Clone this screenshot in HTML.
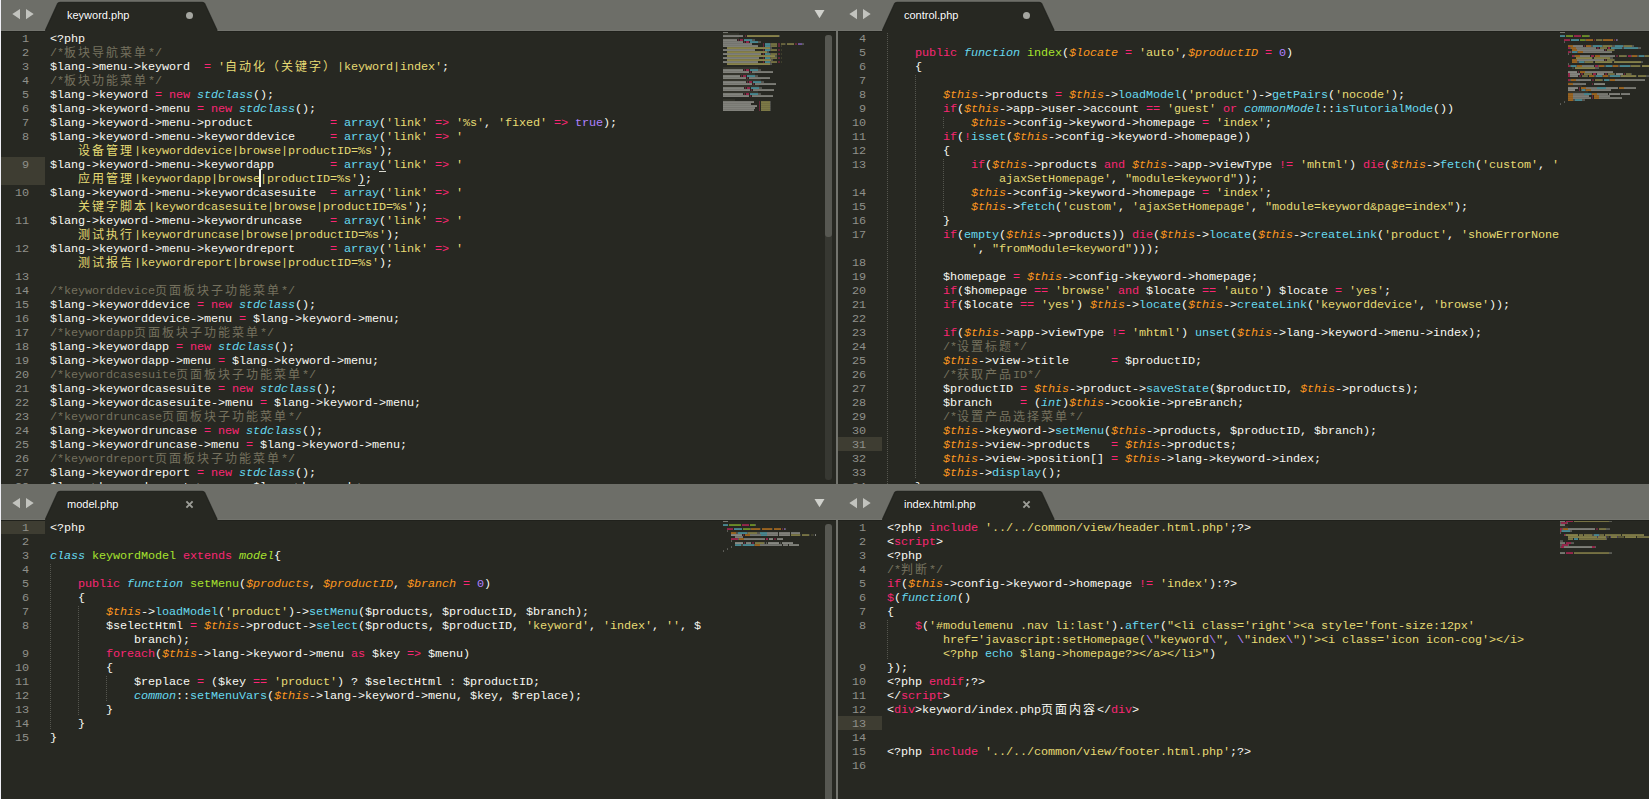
<!DOCTYPE html>
<html><head><meta charset="utf-8"><title>Sublime Text</title>
<style>
html,body{margin:0;padding:0;background:#272822;overflow:hidden;}
#root{position:relative;width:1649px;height:799px;overflow:hidden;background:#272822;
 font-family:"Liberation Mono","Noto Sans CJK SC",monospace;font-size:11.8px;line-height:14px;color:#f8f8f2;}
.abs,.gut,.code,.mm,.ig,.tl,.dot,.bar,.hl,.sb,.pane{position:absolute;}
.pane{overflow:hidden;}
.bar{left:0;width:1649px;background:#6d6e68;}
.gut{width:29px;text-align:right;color:#8f908a;white-space:pre;letter-spacing:-0.0812px;padding-top:1px;}
.gut div,.code div{height:14px;}
.code{white-space:pre;letter-spacing:-0.0812px;padding-top:1px;}
.z{font-family:"Liberation Mono","Noto Sans CJK SC",monospace;font-size:12px;letter-spacing:2px;line-height:0;position:relative;top:1px;}
.c{color:#75715e}.s{color:#e6db74}.k{color:#f92672}.b{color:#66d9ef}
.bi{color:#66d9ef;font-style:italic}.g{color:#a6e22e}.gi{color:#a6e22e;font-style:italic}
.o{color:#fd971f;font-style:italic}.p{color:#ae81ff}.y{color:#f8f8f2}
.tl{font-family:"Liberation Sans",sans-serif;font-size:11px;line-height:14px;color:#fff;white-space:nowrap;letter-spacing:0;
 text-shadow:0 0 1px rgba(0,0,0,.6);}
.dot{width:7px;height:7px;border-radius:50%;background:#a5a6a0;}
.hl{background:#3e3d32;width:44px;}
.ig{width:1px;background-image:linear-gradient(to bottom,#55564f 50%,rgba(0,0,0,0) 50%);background-size:1px 2px;}
.sb{width:7px;border-radius:3px;}
</style></head><body><div id="root">
<div class="pane" style="left:0;top:31px;width:836px;height:453px">
<div class="hl" style="left:1px;top:126px;height:28px"></div>
<div class="gut" style="left:0px;top:0px"><div>1</div><div>2</div><div>3</div><div>4</div><div>5</div><div>6</div><div>7</div><div>8</div><div>&nbsp;</div><div>9</div><div>&nbsp;</div><div>10</div><div>&nbsp;</div><div>11</div><div>&nbsp;</div><div>12</div><div>&nbsp;</div><div>13</div><div>14</div><div>15</div><div>16</div><div>17</div><div>18</div><div>19</div><div>20</div><div>21</div><div>22</div><div>23</div><div>24</div><div>25</div><div>26</div><div>27</div><div>28</div></div>
<div class="code" style="left:50px;top:0px"><div>&lt;?php</div><div><span class="c">/*<span class="z">板块导航菜单</span>*/</span></div><div>$lang-&gt;menu-&gt;keyword  <span class="k">=</span> <span class="s">'<span class="z">自动化（关键字）</span>|keyword|index'</span>;</div><div><span class="c">/*<span class="z">板块功能菜单</span>*/</span></div><div>$lang-&gt;keyword <span class="k">=</span> <span class="k">new</span> <span class="bi">stdclass</span>();</div><div>$lang-&gt;keyword-&gt;menu <span class="k">=</span> <span class="k">new</span> <span class="bi">stdclass</span>();</div><div>$lang-&gt;keyword-&gt;menu-&gt;product           <span class="k">=</span> <span class="b">array</span>(<span class="s">'link'</span> <span class="k">=&gt;</span> <span class="s">'%s'</span>, <span class="s">'fixed'</span> <span class="k">=&gt;</span> <span class="p">true</span>);</div><div>$lang-&gt;keyword-&gt;menu-&gt;keyworddevice     <span class="k">=</span> <span class="b">array</span>(<span class="s">'link'</span> <span class="k">=&gt;</span> <span class="s">'</span></div><div>    <span class="s"><span class="z">设备管理</span>|keyworddevice|browse|productID=%s'</span>);</div><div>$lang-&gt;keyword-&gt;menu-&gt;keywordapp        <span class="k">=</span> <span class="b">array</span>(<span class="s">'link'</span> <span class="k">=&gt;</span> <span class="s">'</span></div><div>    <span class="s"><span class="z">应用管理</span>|keywordapp|browse|productID=%s'</span>);</div><div>$lang-&gt;keyword-&gt;menu-&gt;keywordcasesuite  <span class="k">=</span> <span class="b">array</span>(<span class="s">'link'</span> <span class="k">=&gt;</span> <span class="s">'</span></div><div>    <span class="s"><span class="z">关键字脚本</span>|keywordcasesuite|browse|productID=%s'</span>);</div><div>$lang-&gt;keyword-&gt;menu-&gt;keywordruncase    <span class="k">=</span> <span class="b">array</span>(<span class="s">'link'</span> <span class="k">=&gt;</span> <span class="s">'</span></div><div>    <span class="s"><span class="z">测试执行</span>|keywordruncase|browse|productID=%s'</span>);</div><div>$lang-&gt;keyword-&gt;menu-&gt;keywordreport     <span class="k">=</span> <span class="b">array</span>(<span class="s">'link'</span> <span class="k">=&gt;</span> <span class="s">'</span></div><div>    <span class="s"><span class="z">测试报告</span>|keywordreport|browse|productID=%s'</span>);</div><div>&nbsp;</div><div><span class="c">/*keyworddevice<span class="z">页面板块子功能菜单</span>*/</span></div><div>$lang-&gt;keyworddevice <span class="k">=</span> <span class="k">new</span> <span class="bi">stdclass</span>();</div><div>$lang-&gt;keyworddevice-&gt;menu <span class="k">=</span> $lang-&gt;keyword-&gt;menu;</div><div><span class="c">/*keywordapp<span class="z">页面板块子功能菜单</span>*/</span></div><div>$lang-&gt;keywordapp <span class="k">=</span> <span class="k">new</span> <span class="bi">stdclass</span>();</div><div>$lang-&gt;keywordapp-&gt;menu <span class="k">=</span> $lang-&gt;keyword-&gt;menu;</div><div><span class="c">/*keywordcasesuite<span class="z">页面板块子功能菜单</span>*/</span></div><div>$lang-&gt;keywordcasesuite <span class="k">=</span> <span class="k">new</span> <span class="bi">stdclass</span>();</div><div>$lang-&gt;keywordcasesuite-&gt;menu <span class="k">=</span> $lang-&gt;keyword-&gt;menu;</div><div><span class="c">/*keywordruncase<span class="z">页面板块子功能菜单</span>*/</span></div><div>$lang-&gt;keywordruncase <span class="k">=</span> <span class="k">new</span> <span class="bi">stdclass</span>();</div><div>$lang-&gt;keywordruncase-&gt;menu <span class="k">=</span> $lang-&gt;keyword-&gt;menu;</div><div><span class="c">/*keywordreport<span class="z">页面板块子功能菜单</span>*/</span></div><div>$lang-&gt;keywordreport <span class="k">=</span> <span class="k">new</span> <span class="bi">stdclass</span>();</div><div>$lang-&gt;keywordreport-&gt;menu <span class="k">=</span> $lang-&gt;keyword-&gt;menu;</div></div>
<svg class="mm" style="left:723px;top:0px" width="97" height="80" viewBox="0 0 97 80"><rect x="0" y="0.2" width="5" height="1.7" fill="#f8f8f2" opacity="0.43"/><rect x="0" y="2.2" width="16" height="1.7" fill="#75715e" opacity="0.20"/><rect x="0" y="4.2" width="20" height="1.7" fill="#f8f8f2" opacity="0.46"/><rect x="22" y="4.2" width="1" height="1.7" fill="#f92672" opacity="0.36"/><rect x="24" y="4.2" width="32" height="1.7" fill="#e6db74" opacity="0.57"/><rect x="56" y="4.2" width="1" height="1.7" fill="#f8f8f2" opacity="0.21"/><rect x="0" y="6.2" width="16" height="1.7" fill="#75715e" opacity="0.20"/><rect x="0" y="8.2" width="14" height="1.7" fill="#f8f8f2" opacity="0.48"/><rect x="15" y="8.2" width="1" height="1.7" fill="#f92672" opacity="0.36"/><rect x="17" y="8.2" width="3" height="1.7" fill="#f92672" opacity="0.60"/><rect x="21" y="8.2" width="8" height="1.7" fill="#66d9ef" opacity="0.60"/><rect x="29" y="8.2" width="3" height="1.7" fill="#f8f8f2" opacity="0.26"/><rect x="0" y="10.2" width="20" height="1.7" fill="#f8f8f2" opacity="0.46"/><rect x="21" y="10.2" width="1" height="1.7" fill="#f92672" opacity="0.36"/><rect x="23" y="10.2" width="3" height="1.7" fill="#f92672" opacity="0.60"/><rect x="27" y="10.2" width="8" height="1.7" fill="#66d9ef" opacity="0.60"/><rect x="35" y="10.2" width="3" height="1.7" fill="#f8f8f2" opacity="0.26"/><rect x="0" y="12.2" width="29" height="1.7" fill="#f8f8f2" opacity="0.46"/><rect x="40" y="12.2" width="1" height="1.7" fill="#f92672" opacity="0.36"/><rect x="42" y="12.2" width="5" height="1.7" fill="#66d9ef" opacity="0.60"/><rect x="47" y="12.2" width="1" height="1.7" fill="#f8f8f2" opacity="0.29"/><rect x="48" y="12.2" width="6" height="1.7" fill="#e6db74" opacity="0.45"/><rect x="55" y="12.2" width="2" height="1.7" fill="#f92672" opacity="0.34"/><rect x="58" y="12.2" width="4" height="1.7" fill="#e6db74" opacity="0.38"/><rect x="62" y="12.2" width="1" height="1.7" fill="#f8f8f2" opacity="0.13"/><rect x="64" y="12.2" width="7" height="1.7" fill="#e6db74" opacity="0.47"/><rect x="72" y="12.2" width="2" height="1.7" fill="#f92672" opacity="0.34"/><rect x="75" y="12.2" width="4" height="1.7" fill="#ae81ff" opacity="0.60"/><rect x="79" y="12.2" width="2" height="1.7" fill="#f8f8f2" opacity="0.25"/><rect x="0" y="14.2" width="35" height="1.7" fill="#f8f8f2" opacity="0.47"/><rect x="40" y="14.2" width="1" height="1.7" fill="#f92672" opacity="0.36"/><rect x="42" y="14.2" width="5" height="1.7" fill="#66d9ef" opacity="0.60"/><rect x="47" y="14.2" width="1" height="1.7" fill="#f8f8f2" opacity="0.29"/><rect x="48" y="14.2" width="6" height="1.7" fill="#e6db74" opacity="0.45"/><rect x="55" y="14.2" width="2" height="1.7" fill="#f92672" opacity="0.34"/><rect x="58" y="14.2" width="1" height="1.7" fill="#e6db74" opacity="0.15"/><rect x="4" y="16.2" width="43" height="1.7" fill="#e6db74" opacity="0.57"/><rect x="47" y="16.2" width="2" height="1.7" fill="#f8f8f2" opacity="0.25"/><rect x="0" y="18.2" width="32" height="1.7" fill="#f8f8f2" opacity="0.47"/><rect x="40" y="18.2" width="1" height="1.7" fill="#f92672" opacity="0.36"/><rect x="42" y="18.2" width="5" height="1.7" fill="#66d9ef" opacity="0.60"/><rect x="47" y="18.2" width="1" height="1.7" fill="#f8f8f2" opacity="0.29"/><rect x="48" y="18.2" width="6" height="1.7" fill="#e6db74" opacity="0.45"/><rect x="55" y="18.2" width="2" height="1.7" fill="#f92672" opacity="0.34"/><rect x="58" y="18.2" width="1" height="1.7" fill="#e6db74" opacity="0.15"/><rect x="4" y="20.2" width="40" height="1.7" fill="#e6db74" opacity="0.57"/><rect x="44" y="20.2" width="2" height="1.7" fill="#f8f8f2" opacity="0.25"/><rect x="0" y="22.2" width="38" height="1.7" fill="#f8f8f2" opacity="0.47"/><rect x="40" y="22.2" width="1" height="1.7" fill="#f92672" opacity="0.36"/><rect x="42" y="22.2" width="5" height="1.7" fill="#66d9ef" opacity="0.60"/><rect x="47" y="22.2" width="1" height="1.7" fill="#f8f8f2" opacity="0.29"/><rect x="48" y="22.2" width="6" height="1.7" fill="#e6db74" opacity="0.45"/><rect x="55" y="22.2" width="2" height="1.7" fill="#f92672" opacity="0.34"/><rect x="58" y="22.2" width="1" height="1.7" fill="#e6db74" opacity="0.15"/><rect x="4" y="24.2" width="48" height="1.7" fill="#e6db74" opacity="0.58"/><rect x="52" y="24.2" width="2" height="1.7" fill="#f8f8f2" opacity="0.25"/><rect x="0" y="26.2" width="36" height="1.7" fill="#f8f8f2" opacity="0.47"/><rect x="40" y="26.2" width="1" height="1.7" fill="#f92672" opacity="0.36"/><rect x="42" y="26.2" width="5" height="1.7" fill="#66d9ef" opacity="0.60"/><rect x="47" y="26.2" width="1" height="1.7" fill="#f8f8f2" opacity="0.29"/><rect x="48" y="26.2" width="6" height="1.7" fill="#e6db74" opacity="0.45"/><rect x="55" y="26.2" width="2" height="1.7" fill="#f92672" opacity="0.34"/><rect x="58" y="26.2" width="1" height="1.7" fill="#e6db74" opacity="0.15"/><rect x="4" y="28.2" width="44" height="1.7" fill="#e6db74" opacity="0.57"/><rect x="48" y="28.2" width="2" height="1.7" fill="#f8f8f2" opacity="0.25"/><rect x="0" y="30.2" width="35" height="1.7" fill="#f8f8f2" opacity="0.47"/><rect x="40" y="30.2" width="1" height="1.7" fill="#f92672" opacity="0.36"/><rect x="42" y="30.2" width="5" height="1.7" fill="#66d9ef" opacity="0.60"/><rect x="47" y="30.2" width="1" height="1.7" fill="#f8f8f2" opacity="0.29"/><rect x="48" y="30.2" width="6" height="1.7" fill="#e6db74" opacity="0.45"/><rect x="55" y="30.2" width="2" height="1.7" fill="#f92672" opacity="0.34"/><rect x="58" y="30.2" width="1" height="1.7" fill="#e6db74" opacity="0.15"/><rect x="4" y="32.2" width="43" height="1.7" fill="#e6db74" opacity="0.57"/><rect x="47" y="32.2" width="2" height="1.7" fill="#f8f8f2" opacity="0.25"/><rect x="0" y="36.2" width="35" height="1.7" fill="#75715e" opacity="0.21"/><rect x="0" y="38.2" width="20" height="1.7" fill="#f8f8f2" opacity="0.49"/><rect x="21" y="38.2" width="1" height="1.7" fill="#f92672" opacity="0.36"/><rect x="23" y="38.2" width="3" height="1.7" fill="#f92672" opacity="0.60"/><rect x="27" y="38.2" width="8" height="1.7" fill="#66d9ef" opacity="0.60"/><rect x="35" y="38.2" width="3" height="1.7" fill="#f8f8f2" opacity="0.26"/><rect x="0" y="40.2" width="26" height="1.7" fill="#f8f8f2" opacity="0.48"/><rect x="27" y="40.2" width="1" height="1.7" fill="#f92672" opacity="0.36"/><rect x="29" y="40.2" width="21" height="1.7" fill="#f8f8f2" opacity="0.45"/><rect x="0" y="42.2" width="32" height="1.7" fill="#75715e" opacity="0.21"/><rect x="0" y="44.2" width="17" height="1.7" fill="#f8f8f2" opacity="0.49"/><rect x="18" y="44.2" width="1" height="1.7" fill="#f92672" opacity="0.36"/><rect x="20" y="44.2" width="3" height="1.7" fill="#f92672" opacity="0.60"/><rect x="24" y="44.2" width="8" height="1.7" fill="#66d9ef" opacity="0.60"/><rect x="32" y="44.2" width="3" height="1.7" fill="#f8f8f2" opacity="0.26"/><rect x="0" y="46.2" width="23" height="1.7" fill="#f8f8f2" opacity="0.47"/><rect x="24" y="46.2" width="1" height="1.7" fill="#f92672" opacity="0.36"/><rect x="26" y="46.2" width="21" height="1.7" fill="#f8f8f2" opacity="0.45"/><rect x="0" y="48.2" width="38" height="1.7" fill="#75715e" opacity="0.22"/><rect x="0" y="50.2" width="23" height="1.7" fill="#f8f8f2" opacity="0.50"/><rect x="24" y="50.2" width="1" height="1.7" fill="#f92672" opacity="0.36"/><rect x="26" y="50.2" width="3" height="1.7" fill="#f92672" opacity="0.60"/><rect x="30" y="50.2" width="8" height="1.7" fill="#66d9ef" opacity="0.60"/><rect x="38" y="50.2" width="3" height="1.7" fill="#f8f8f2" opacity="0.26"/><rect x="0" y="52.2" width="29" height="1.7" fill="#f8f8f2" opacity="0.48"/><rect x="30" y="52.2" width="1" height="1.7" fill="#f92672" opacity="0.36"/><rect x="32" y="52.2" width="21" height="1.7" fill="#f8f8f2" opacity="0.45"/><rect x="0" y="54.2" width="36" height="1.7" fill="#75715e" opacity="0.21"/><rect x="0" y="56.2" width="21" height="1.7" fill="#f8f8f2" opacity="0.49"/><rect x="22" y="56.2" width="1" height="1.7" fill="#f92672" opacity="0.36"/><rect x="24" y="56.2" width="3" height="1.7" fill="#f92672" opacity="0.60"/><rect x="28" y="56.2" width="8" height="1.7" fill="#66d9ef" opacity="0.60"/><rect x="36" y="56.2" width="3" height="1.7" fill="#f8f8f2" opacity="0.26"/><rect x="0" y="58.2" width="27" height="1.7" fill="#f8f8f2" opacity="0.48"/><rect x="28" y="58.2" width="1" height="1.7" fill="#f92672" opacity="0.36"/><rect x="30" y="58.2" width="21" height="1.7" fill="#f8f8f2" opacity="0.45"/><rect x="0" y="60.2" width="35" height="1.7" fill="#75715e" opacity="0.21"/><rect x="0" y="62.2" width="20" height="1.7" fill="#f8f8f2" opacity="0.49"/><rect x="21" y="62.2" width="1" height="1.7" fill="#f92672" opacity="0.36"/><rect x="23" y="62.2" width="3" height="1.7" fill="#f92672" opacity="0.60"/><rect x="27" y="62.2" width="8" height="1.7" fill="#66d9ef" opacity="0.60"/><rect x="35" y="62.2" width="3" height="1.7" fill="#f8f8f2" opacity="0.26"/><rect x="0" y="64.2" width="26" height="1.7" fill="#f8f8f2" opacity="0.48"/><rect x="27" y="64.2" width="1" height="1.7" fill="#f92672" opacity="0.36"/><rect x="29" y="64.2" width="21" height="1.7" fill="#f8f8f2" opacity="0.45"/><rect x="0" y="68.2" width="12" height="1.7" fill="#75715e" opacity="0.18"/><rect x="0" y="70.2" width="31" height="1.7" fill="#f8f8f2" opacity="0.48"/><rect x="36" y="70.2" width="1" height="1.7" fill="#f92672" opacity="0.36"/><rect x="38" y="70.2" width="9" height="1.7" fill="#e6db74" opacity="0.50"/><rect x="47" y="70.2" width="1" height="1.7" fill="#f8f8f2" opacity="0.21"/><rect x="0" y="72.2" width="28" height="1.7" fill="#f8f8f2" opacity="0.48"/><rect x="36" y="72.2" width="1" height="1.7" fill="#f92672" opacity="0.36"/><rect x="38" y="72.2" width="9" height="1.7" fill="#e6db74" opacity="0.50"/><rect x="47" y="72.2" width="1" height="1.7" fill="#f8f8f2" opacity="0.21"/><rect x="0" y="74.2" width="34" height="1.7" fill="#f8f8f2" opacity="0.49"/><rect x="36" y="74.2" width="1" height="1.7" fill="#f92672" opacity="0.36"/><rect x="38" y="74.2" width="9" height="1.7" fill="#e6db74" opacity="0.50"/><rect x="47" y="74.2" width="1" height="1.7" fill="#f8f8f2" opacity="0.21"/><rect x="0" y="76.2" width="32" height="1.7" fill="#f8f8f2" opacity="0.48"/><rect x="36" y="76.2" width="1" height="1.7" fill="#f92672" opacity="0.36"/><rect x="38" y="76.2" width="9" height="1.7" fill="#e6db74" opacity="0.50"/><rect x="47" y="76.2" width="1" height="1.7" fill="#f8f8f2" opacity="0.21"/><rect x="0" y="78.2" width="31" height="1.7" fill="#f8f8f2" opacity="0.48"/><rect x="36" y="78.2" width="1" height="1.7" fill="#f92672" opacity="0.36"/><rect x="38" y="78.2" width="9" height="1.7" fill="#e6db74" opacity="0.50"/><rect x="47" y="78.2" width="1" height="1.7" fill="#f8f8f2" opacity="0.21"/></svg>
<div class="abs" style="left:259px;top:138px;width:2px;height:18px;background:#f8f8f0"></div>
<div class="abs" style="left:379px;top:140px;width:7px;height:1px;background:#d8d8d0"></div>
<div class="abs" style="left:358px;top:154px;width:7px;height:1px;background:#d8d8d0"></div>
<div class="sb" style="left:825px;top:4px;height:445px;background:#373832"></div>
<div class="sb" style="left:825px;top:4px;height:202px;background:#575852"></div>
</div>
<div class="pane" style="left:838px;top:31px;width:811px;height:453px">
<div class="hl" style="left:0px;top:406px;height:14px"></div>
<div class="gut" style="left:-1px;top:0px"><div>4</div><div>5</div><div>6</div><div>7</div><div>8</div><div>9</div><div>10</div><div>11</div><div>12</div><div>13</div><div>&nbsp;</div><div>14</div><div>15</div><div>16</div><div>17</div><div>&nbsp;</div><div>18</div><div>19</div><div>20</div><div>21</div><div>22</div><div>23</div><div>24</div><div>25</div><div>26</div><div>27</div><div>28</div><div>29</div><div>30</div><div>31</div><div>32</div><div>33</div><div>34</div></div>
<div class="code" style="left:49px;top:0px"><div>&nbsp;</div><div>    <span class="k">public</span> <span class="bi">function</span> <span class="g">index</span>(<span class="o">$locate</span> <span class="k">=</span> <span class="s">'auto'</span>,<span class="o">$productID</span> <span class="k">=</span> <span class="p">0</span>)</div><div>    {</div><div>&nbsp;</div><div>        <span class="o">$this</span>-&gt;products <span class="k">=</span> <span class="o">$this</span>-&gt;<span class="b">loadModel</span>(<span class="s">'product'</span>)-&gt;<span class="b">getPairs</span>(<span class="s">'nocode'</span>);</div><div>        <span class="k">if</span>(<span class="o">$this</span>-&gt;app-&gt;user-&gt;account <span class="k">==</span> <span class="s">'guest'</span> <span class="k">or</span> <span class="bi">commonModel</span>::<span class="b">isTutorialMode</span>())</div><div>            <span class="o">$this</span>-&gt;config-&gt;keyword-&gt;homepage <span class="k">=</span> <span class="s">'index'</span>;</div><div>        <span class="k">if</span>(<span class="k">!</span><span class="b">isset</span>(<span class="o">$this</span>-&gt;config-&gt;keyword-&gt;homepage))</div><div>        {</div><div>            <span class="k">if</span>(<span class="o">$this</span>-&gt;products <span class="k">and</span> <span class="o">$this</span>-&gt;app-&gt;viewType <span class="k">!=</span> <span class="s">'mhtml'</span>) <span class="k">die</span>(<span class="o">$this</span>-&gt;<span class="b">fetch</span>(<span class="s">'custom'</span>, <span class="s">'</span></div><div>                <span class="s">ajaxSetHomepage'</span>, <span class="s">"module=keyword"</span>));</div><div>            <span class="o">$this</span>-&gt;config-&gt;keyword-&gt;homepage <span class="k">=</span> <span class="s">'index'</span>;</div><div>            <span class="o">$this</span>-&gt;<span class="b">fetch</span>(<span class="s">'custom'</span>, <span class="s">'ajaxSetHomepage'</span>, <span class="s">"module=keyword&amp;page=index"</span>);</div><div>        }</div><div>        <span class="k">if</span>(<span class="b">empty</span>(<span class="o">$this</span>-&gt;products)) <span class="k">die</span>(<span class="o">$this</span>-&gt;<span class="b">locate</span>(<span class="o">$this</span>-&gt;<span class="b">createLink</span>(<span class="s">'product'</span>, <span class="s">'showErrorNone</span></div><div>            <span class="s">'</span>, <span class="s">"fromModule=keyword"</span>)));</div><div>&nbsp;</div><div>        $homepage <span class="k">=</span> <span class="o">$this</span>-&gt;config-&gt;keyword-&gt;homepage;</div><div>        <span class="k">if</span>($homepage <span class="k">==</span> <span class="s">'browse'</span> <span class="k">and</span> $locate <span class="k">==</span> <span class="s">'auto'</span>) $locate <span class="k">=</span> <span class="s">'yes'</span>;</div><div>        <span class="k">if</span>($locate <span class="k">==</span> <span class="s">'yes'</span>) <span class="o">$this</span>-&gt;<span class="b">locate</span>(<span class="o">$this</span>-&gt;<span class="b">createLink</span>(<span class="s">'keyworddevice'</span>, <span class="s">'browse'</span>));</div><div>&nbsp;</div><div>        <span class="k">if</span>(<span class="o">$this</span>-&gt;app-&gt;viewType <span class="k">!=</span> <span class="s">'mhtml'</span>) <span class="b">unset</span>(<span class="o">$this</span>-&gt;lang-&gt;keyword-&gt;menu-&gt;index);</div><div>        <span class="c">/*<span class="z">设置标题</span>*/</span></div><div>        <span class="o">$this</span>-&gt;view-&gt;title      <span class="k">=</span> $productID;</div><div>        <span class="c">/*<span class="z">获取产品</span>ID*/</span></div><div>        $productID <span class="k">=</span> <span class="o">$this</span>-&gt;product-&gt;<span class="b">saveState</span>($productID, <span class="o">$this</span>-&gt;products);</div><div>        $branch    <span class="k">=</span> (<span class="bi">int</span>)<span class="o">$this</span>-&gt;cookie-&gt;preBranch;</div><div>        <span class="c">/*<span class="z">设置产品选择菜单</span>*/</span></div><div>        <span class="o">$this</span>-&gt;keyword-&gt;<span class="b">setMenu</span>(<span class="o">$this</span>-&gt;products, $productID, $branch);</div><div>        <span class="o">$this</span>-&gt;view-&gt;products   <span class="k">=</span> <span class="o">$this</span>-&gt;products;</div><div>        <span class="o">$this</span>-&gt;view-&gt;position[] <span class="k">=</span> <span class="o">$this</span>-&gt;lang-&gt;keyword-&gt;index;</div><div>        <span class="o">$this</span>-&gt;<span class="b">display</span>();</div><div>    }</div></div>
<div class="ig" style="left:49px;top:2px;height:460px"></div>
<div class="ig" style="left:77px;top:44px;height:404px"></div>
<div class="ig" style="left:105px;top:86px;height:12px"></div>
<div class="ig" style="left:105px;top:128px;height:54px"></div>
<svg class="mm" style="left:722px;top:0px" width="89" height="74" viewBox="0 0 89 74"><rect x="0" y="0.2" width="5" height="1.7" fill="#f8f8f2" opacity="0.43"/><rect x="0" y="4.2" width="5" height="1.7" fill="#66d9ef" opacity="0.60"/><rect x="6" y="4.2" width="7" height="1.7" fill="#a6e22e" opacity="0.60"/><rect x="14" y="4.2" width="7" height="1.7" fill="#f92672" opacity="0.60"/><rect x="22" y="4.2" width="7" height="1.7" fill="#a6e22e" opacity="0.60"/><rect x="29" y="4.2" width="1" height="1.7" fill="#f8f8f2" opacity="0.29"/><rect x="4" y="8.2" width="6" height="1.7" fill="#f92672" opacity="0.60"/><rect x="11" y="8.2" width="8" height="1.7" fill="#66d9ef" opacity="0.60"/><rect x="20" y="8.2" width="5" height="1.7" fill="#a6e22e" opacity="0.60"/><rect x="25" y="8.2" width="1" height="1.7" fill="#f8f8f2" opacity="0.29"/><rect x="26" y="8.2" width="7" height="1.7" fill="#fd971f" opacity="0.60"/><rect x="34" y="8.2" width="1" height="1.7" fill="#f92672" opacity="0.36"/><rect x="36" y="8.2" width="6" height="1.7" fill="#e6db74" opacity="0.45"/><rect x="42" y="8.2" width="1" height="1.7" fill="#f8f8f2" opacity="0.13"/><rect x="43" y="8.2" width="10" height="1.7" fill="#fd971f" opacity="0.60"/><rect x="54" y="8.2" width="1" height="1.7" fill="#f92672" opacity="0.36"/><rect x="56" y="8.2" width="1" height="1.7" fill="#ae81ff" opacity="0.60"/><rect x="57" y="8.2" width="1" height="1.7" fill="#f8f8f2" opacity="0.29"/><rect x="4" y="10.2" width="1" height="1.7" fill="#f8f8f2" opacity="0.29"/><rect x="8" y="14.2" width="5" height="1.7" fill="#fd971f" opacity="0.60"/><rect x="13" y="14.2" width="10" height="1.7" fill="#f8f8f2" opacity="0.46"/><rect x="24" y="14.2" width="1" height="1.7" fill="#f92672" opacity="0.36"/><rect x="26" y="14.2" width="5" height="1.7" fill="#fd971f" opacity="0.60"/><rect x="31" y="14.2" width="2" height="1.7" fill="#f8f8f2" opacity="0.23"/><rect x="33" y="14.2" width="9" height="1.7" fill="#66d9ef" opacity="0.60"/><rect x="42" y="14.2" width="1" height="1.7" fill="#f8f8f2" opacity="0.29"/><rect x="43" y="14.2" width="9" height="1.7" fill="#e6db74" opacity="0.50"/><rect x="52" y="14.2" width="3" height="1.7" fill="#f8f8f2" opacity="0.25"/><rect x="55" y="14.2" width="8" height="1.7" fill="#66d9ef" opacity="0.60"/><rect x="63" y="14.2" width="1" height="1.7" fill="#f8f8f2" opacity="0.29"/><rect x="64" y="14.2" width="8" height="1.7" fill="#e6db74" opacity="0.49"/><rect x="72" y="14.2" width="2" height="1.7" fill="#f8f8f2" opacity="0.25"/><rect x="8" y="16.2" width="2" height="1.7" fill="#f92672" opacity="0.60"/><rect x="10" y="16.2" width="1" height="1.7" fill="#f8f8f2" opacity="0.29"/><rect x="11" y="16.2" width="5" height="1.7" fill="#fd971f" opacity="0.60"/><rect x="16" y="16.2" width="20" height="1.7" fill="#f8f8f2" opacity="0.43"/><rect x="37" y="16.2" width="2" height="1.7" fill="#f92672" opacity="0.36"/><rect x="40" y="16.2" width="7" height="1.7" fill="#e6db74" opacity="0.47"/><rect x="48" y="16.2" width="2" height="1.7" fill="#f92672" opacity="0.60"/><rect x="51" y="16.2" width="11" height="1.7" fill="#66d9ef" opacity="0.60"/><rect x="62" y="16.2" width="2" height="1.7" fill="#f8f8f2" opacity="0.18"/><rect x="64" y="16.2" width="14" height="1.7" fill="#66d9ef" opacity="0.60"/><rect x="78" y="16.2" width="3" height="1.7" fill="#f8f8f2" opacity="0.29"/><rect x="12" y="18.2" width="5" height="1.7" fill="#fd971f" opacity="0.60"/><rect x="17" y="18.2" width="27" height="1.7" fill="#f8f8f2" opacity="0.46"/><rect x="45" y="18.2" width="1" height="1.7" fill="#f92672" opacity="0.36"/><rect x="47" y="18.2" width="7" height="1.7" fill="#e6db74" opacity="0.47"/><rect x="54" y="18.2" width="1" height="1.7" fill="#f8f8f2" opacity="0.21"/><rect x="8" y="20.2" width="2" height="1.7" fill="#f92672" opacity="0.60"/><rect x="10" y="20.2" width="1" height="1.7" fill="#f8f8f2" opacity="0.29"/><rect x="11" y="20.2" width="1" height="1.7" fill="#f92672" opacity="0.30"/><rect x="12" y="20.2" width="5" height="1.7" fill="#66d9ef" opacity="0.60"/><rect x="17" y="20.2" width="1" height="1.7" fill="#f8f8f2" opacity="0.29"/><rect x="18" y="20.2" width="5" height="1.7" fill="#fd971f" opacity="0.60"/><rect x="23" y="20.2" width="29" height="1.7" fill="#f8f8f2" opacity="0.44"/><rect x="8" y="22.2" width="1" height="1.7" fill="#f8f8f2" opacity="0.29"/><rect x="12" y="24.2" width="2" height="1.7" fill="#f92672" opacity="0.60"/><rect x="14" y="24.2" width="1" height="1.7" fill="#f8f8f2" opacity="0.29"/><rect x="15" y="24.2" width="5" height="1.7" fill="#fd971f" opacity="0.60"/><rect x="20" y="24.2" width="10" height="1.7" fill="#f8f8f2" opacity="0.46"/><rect x="31" y="24.2" width="3" height="1.7" fill="#f92672" opacity="0.60"/><rect x="35" y="24.2" width="5" height="1.7" fill="#fd971f" opacity="0.60"/><rect x="40" y="24.2" width="15" height="1.7" fill="#f8f8f2" opacity="0.44"/><rect x="56" y="24.2" width="2" height="1.7" fill="#f92672" opacity="0.33"/><rect x="59" y="24.2" width="7" height="1.7" fill="#e6db74" opacity="0.47"/><rect x="66" y="24.2" width="1" height="1.7" fill="#f8f8f2" opacity="0.29"/><rect x="68" y="24.2" width="3" height="1.7" fill="#f92672" opacity="0.60"/><rect x="71" y="24.2" width="1" height="1.7" fill="#f8f8f2" opacity="0.29"/><rect x="72" y="24.2" width="5" height="1.7" fill="#fd971f" opacity="0.60"/><rect x="77" y="24.2" width="2" height="1.7" fill="#f8f8f2" opacity="0.23"/><rect x="79" y="24.2" width="5" height="1.7" fill="#66d9ef" opacity="0.60"/><rect x="84" y="24.2" width="1" height="1.7" fill="#f8f8f2" opacity="0.29"/><rect x="85" y="24.2" width="4" height="1.7" fill="#e6db74" opacity="0.49"/><rect x="16" y="26.2" width="16" height="1.7" fill="#e6db74" opacity="0.57"/><rect x="32" y="26.2" width="1" height="1.7" fill="#f8f8f2" opacity="0.13"/><rect x="34" y="26.2" width="16" height="1.7" fill="#e6db74" opacity="0.54"/><rect x="50" y="26.2" width="3" height="1.7" fill="#f8f8f2" opacity="0.26"/><rect x="12" y="28.2" width="5" height="1.7" fill="#fd971f" opacity="0.60"/><rect x="17" y="28.2" width="27" height="1.7" fill="#f8f8f2" opacity="0.46"/><rect x="45" y="28.2" width="1" height="1.7" fill="#f92672" opacity="0.36"/><rect x="47" y="28.2" width="7" height="1.7" fill="#e6db74" opacity="0.47"/><rect x="54" y="28.2" width="1" height="1.7" fill="#f8f8f2" opacity="0.21"/><rect x="12" y="30.2" width="5" height="1.7" fill="#fd971f" opacity="0.60"/><rect x="17" y="30.2" width="2" height="1.7" fill="#f8f8f2" opacity="0.23"/><rect x="19" y="30.2" width="5" height="1.7" fill="#66d9ef" opacity="0.60"/><rect x="24" y="30.2" width="1" height="1.7" fill="#f8f8f2" opacity="0.29"/><rect x="25" y="30.2" width="8" height="1.7" fill="#e6db74" opacity="0.49"/><rect x="33" y="30.2" width="1" height="1.7" fill="#f8f8f2" opacity="0.13"/><rect x="35" y="30.2" width="17" height="1.7" fill="#e6db74" opacity="0.55"/><rect x="52" y="30.2" width="1" height="1.7" fill="#f8f8f2" opacity="0.13"/><rect x="54" y="30.2" width="27" height="1.7" fill="#e6db74" opacity="0.55"/><rect x="81" y="30.2" width="2" height="1.7" fill="#f8f8f2" opacity="0.25"/><rect x="8" y="32.2" width="1" height="1.7" fill="#f8f8f2" opacity="0.29"/><rect x="8" y="34.2" width="2" height="1.7" fill="#f92672" opacity="0.60"/><rect x="10" y="34.2" width="1" height="1.7" fill="#f8f8f2" opacity="0.29"/><rect x="11" y="34.2" width="5" height="1.7" fill="#66d9ef" opacity="0.60"/><rect x="16" y="34.2" width="1" height="1.7" fill="#f8f8f2" opacity="0.29"/><rect x="17" y="34.2" width="5" height="1.7" fill="#fd971f" opacity="0.60"/><rect x="22" y="34.2" width="12" height="1.7" fill="#f8f8f2" opacity="0.43"/><rect x="35" y="34.2" width="3" height="1.7" fill="#f92672" opacity="0.60"/><rect x="38" y="34.2" width="1" height="1.7" fill="#f8f8f2" opacity="0.29"/><rect x="39" y="34.2" width="5" height="1.7" fill="#fd971f" opacity="0.60"/><rect x="44" y="34.2" width="2" height="1.7" fill="#f8f8f2" opacity="0.23"/><rect x="46" y="34.2" width="6" height="1.7" fill="#66d9ef" opacity="0.60"/><rect x="52" y="34.2" width="1" height="1.7" fill="#f8f8f2" opacity="0.29"/><rect x="53" y="34.2" width="5" height="1.7" fill="#fd971f" opacity="0.60"/><rect x="58" y="34.2" width="2" height="1.7" fill="#f8f8f2" opacity="0.23"/><rect x="60" y="34.2" width="10" height="1.7" fill="#66d9ef" opacity="0.60"/><rect x="70" y="34.2" width="1" height="1.7" fill="#f8f8f2" opacity="0.29"/><rect x="71" y="34.2" width="9" height="1.7" fill="#e6db74" opacity="0.50"/><rect x="80" y="34.2" width="1" height="1.7" fill="#f8f8f2" opacity="0.13"/><rect x="82" y="34.2" width="7" height="1.7" fill="#e6db74" opacity="0.57"/><rect x="12" y="36.2" width="1" height="1.7" fill="#e6db74" opacity="0.15"/><rect x="13" y="36.2" width="1" height="1.7" fill="#f8f8f2" opacity="0.13"/><rect x="15" y="36.2" width="20" height="1.7" fill="#e6db74" opacity="0.55"/><rect x="35" y="36.2" width="4" height="1.7" fill="#f8f8f2" opacity="0.27"/><rect x="8" y="40.2" width="9" height="1.7" fill="#f8f8f2" opacity="0.52"/><rect x="18" y="40.2" width="1" height="1.7" fill="#f92672" opacity="0.36"/><rect x="20" y="40.2" width="5" height="1.7" fill="#fd971f" opacity="0.60"/><rect x="25" y="40.2" width="28" height="1.7" fill="#f8f8f2" opacity="0.45"/><rect x="8" y="42.2" width="2" height="1.7" fill="#f92672" opacity="0.60"/><rect x="10" y="42.2" width="10" height="1.7" fill="#f8f8f2" opacity="0.50"/><rect x="21" y="42.2" width="2" height="1.7" fill="#f92672" opacity="0.36"/><rect x="24" y="42.2" width="8" height="1.7" fill="#e6db74" opacity="0.49"/><rect x="33" y="42.2" width="3" height="1.7" fill="#f92672" opacity="0.60"/><rect x="37" y="42.2" width="7" height="1.7" fill="#f8f8f2" opacity="0.52"/><rect x="45" y="42.2" width="2" height="1.7" fill="#f92672" opacity="0.36"/><rect x="48" y="42.2" width="6" height="1.7" fill="#e6db74" opacity="0.45"/><rect x="54" y="42.2" width="1" height="1.7" fill="#f8f8f2" opacity="0.29"/><rect x="56" y="42.2" width="7" height="1.7" fill="#f8f8f2" opacity="0.52"/><rect x="64" y="42.2" width="1" height="1.7" fill="#f92672" opacity="0.36"/><rect x="66" y="42.2" width="5" height="1.7" fill="#e6db74" opacity="0.42"/><rect x="71" y="42.2" width="1" height="1.7" fill="#f8f8f2" opacity="0.21"/><rect x="8" y="44.2" width="2" height="1.7" fill="#f92672" opacity="0.60"/><rect x="10" y="44.2" width="8" height="1.7" fill="#f8f8f2" opacity="0.49"/><rect x="19" y="44.2" width="2" height="1.7" fill="#f92672" opacity="0.36"/><rect x="22" y="44.2" width="5" height="1.7" fill="#e6db74" opacity="0.42"/><rect x="27" y="44.2" width="1" height="1.7" fill="#f8f8f2" opacity="0.29"/><rect x="29" y="44.2" width="5" height="1.7" fill="#fd971f" opacity="0.60"/><rect x="34" y="44.2" width="2" height="1.7" fill="#f8f8f2" opacity="0.23"/><rect x="36" y="44.2" width="6" height="1.7" fill="#66d9ef" opacity="0.60"/><rect x="42" y="44.2" width="1" height="1.7" fill="#f8f8f2" opacity="0.29"/><rect x="43" y="44.2" width="5" height="1.7" fill="#fd971f" opacity="0.60"/><rect x="48" y="44.2" width="2" height="1.7" fill="#f8f8f2" opacity="0.23"/><rect x="50" y="44.2" width="10" height="1.7" fill="#66d9ef" opacity="0.60"/><rect x="60" y="44.2" width="1" height="1.7" fill="#f8f8f2" opacity="0.29"/><rect x="61" y="44.2" width="15" height="1.7" fill="#e6db74" opacity="0.54"/><rect x="76" y="44.2" width="1" height="1.7" fill="#f8f8f2" opacity="0.13"/><rect x="78" y="44.2" width="8" height="1.7" fill="#e6db74" opacity="0.49"/><rect x="86" y="44.2" width="3" height="1.7" fill="#f8f8f2" opacity="0.26"/><rect x="8" y="48.2" width="2" height="1.7" fill="#f92672" opacity="0.60"/><rect x="10" y="48.2" width="1" height="1.7" fill="#f8f8f2" opacity="0.29"/><rect x="11" y="48.2" width="5" height="1.7" fill="#fd971f" opacity="0.60"/><rect x="16" y="48.2" width="15" height="1.7" fill="#f8f8f2" opacity="0.44"/><rect x="32" y="48.2" width="2" height="1.7" fill="#f92672" opacity="0.33"/><rect x="35" y="48.2" width="7" height="1.7" fill="#e6db74" opacity="0.47"/><rect x="42" y="48.2" width="1" height="1.7" fill="#f8f8f2" opacity="0.29"/><rect x="44" y="48.2" width="5" height="1.7" fill="#66d9ef" opacity="0.60"/><rect x="49" y="48.2" width="1" height="1.7" fill="#f8f8f2" opacity="0.29"/><rect x="50" y="48.2" width="5" height="1.7" fill="#fd971f" opacity="0.60"/><rect x="55" y="48.2" width="30" height="1.7" fill="#f8f8f2" opacity="0.43"/><rect x="8" y="50.2" width="12" height="1.7" fill="#75715e" opacity="0.18"/><rect x="8" y="52.2" width="5" height="1.7" fill="#fd971f" opacity="0.60"/><rect x="13" y="52.2" width="13" height="1.7" fill="#f8f8f2" opacity="0.43"/><rect x="32" y="52.2" width="1" height="1.7" fill="#f92672" opacity="0.36"/><rect x="34" y="52.2" width="11" height="1.7" fill="#f8f8f2" opacity="0.49"/><rect x="8" y="54.2" width="14" height="1.7" fill="#75715e" opacity="0.19"/><rect x="8" y="56.2" width="10" height="1.7" fill="#f8f8f2" opacity="0.52"/><rect x="19" y="56.2" width="1" height="1.7" fill="#f92672" opacity="0.36"/><rect x="21" y="56.2" width="5" height="1.7" fill="#fd971f" opacity="0.60"/><rect x="26" y="56.2" width="11" height="1.7" fill="#f8f8f2" opacity="0.42"/><rect x="37" y="56.2" width="9" height="1.7" fill="#66d9ef" opacity="0.60"/><rect x="46" y="56.2" width="12" height="1.7" fill="#f8f8f2" opacity="0.47"/><rect x="59" y="56.2" width="5" height="1.7" fill="#fd971f" opacity="0.60"/><rect x="64" y="56.2" width="12" height="1.7" fill="#f8f8f2" opacity="0.43"/><rect x="8" y="58.2" width="7" height="1.7" fill="#f8f8f2" opacity="0.52"/><rect x="19" y="58.2" width="1" height="1.7" fill="#f92672" opacity="0.36"/><rect x="21" y="58.2" width="1" height="1.7" fill="#f8f8f2" opacity="0.29"/><rect x="22" y="58.2" width="3" height="1.7" fill="#66d9ef" opacity="0.60"/><rect x="25" y="58.2" width="1" height="1.7" fill="#f8f8f2" opacity="0.29"/><rect x="26" y="58.2" width="5" height="1.7" fill="#fd971f" opacity="0.60"/><rect x="31" y="58.2" width="20" height="1.7" fill="#f8f8f2" opacity="0.45"/><rect x="8" y="60.2" width="20" height="1.7" fill="#75715e" opacity="0.21"/><rect x="8" y="62.2" width="5" height="1.7" fill="#fd971f" opacity="0.60"/><rect x="13" y="62.2" width="11" height="1.7" fill="#f8f8f2" opacity="0.42"/><rect x="24" y="62.2" width="7" height="1.7" fill="#66d9ef" opacity="0.60"/><rect x="31" y="62.2" width="1" height="1.7" fill="#f8f8f2" opacity="0.29"/><rect x="32" y="62.2" width="5" height="1.7" fill="#fd971f" opacity="0.60"/><rect x="37" y="62.2" width="11" height="1.7" fill="#f8f8f2" opacity="0.43"/><rect x="49" y="62.2" width="11" height="1.7" fill="#f8f8f2" opacity="0.48"/><rect x="61" y="62.2" width="9" height="1.7" fill="#f8f8f2" opacity="0.46"/><rect x="8" y="64.2" width="5" height="1.7" fill="#fd971f" opacity="0.60"/><rect x="13" y="64.2" width="16" height="1.7" fill="#f8f8f2" opacity="0.45"/><rect x="32" y="64.2" width="1" height="1.7" fill="#f92672" opacity="0.36"/><rect x="34" y="64.2" width="5" height="1.7" fill="#fd971f" opacity="0.60"/><rect x="39" y="64.2" width="11" height="1.7" fill="#f8f8f2" opacity="0.44"/><rect x="8" y="66.2" width="5" height="1.7" fill="#fd971f" opacity="0.60"/><rect x="13" y="66.2" width="18" height="1.7" fill="#f8f8f2" opacity="0.43"/><rect x="32" y="66.2" width="1" height="1.7" fill="#f92672" opacity="0.36"/><rect x="34" y="66.2" width="5" height="1.7" fill="#fd971f" opacity="0.60"/><rect x="39" y="66.2" width="23" height="1.7" fill="#f8f8f2" opacity="0.43"/><rect x="8" y="68.2" width="5" height="1.7" fill="#fd971f" opacity="0.60"/><rect x="13" y="68.2" width="2" height="1.7" fill="#f8f8f2" opacity="0.23"/><rect x="15" y="68.2" width="7" height="1.7" fill="#66d9ef" opacity="0.60"/><rect x="22" y="68.2" width="3" height="1.7" fill="#f8f8f2" opacity="0.26"/><rect x="4" y="70.2" width="1" height="1.7" fill="#f8f8f2" opacity="0.29"/><rect x="0" y="72.2" width="1" height="1.7" fill="#f8f8f2" opacity="0.29"/></svg>
</div>
<div class="pane" style="left:0;top:520px;width:836px;height:279px">
<div class="hl" style="left:1px;top:0px;height:14px"></div>
<div class="gut" style="left:0px;top:0px"><div>1</div><div>2</div><div>3</div><div>4</div><div>5</div><div>6</div><div>7</div><div>8</div><div>&nbsp;</div><div>9</div><div>10</div><div>11</div><div>12</div><div>13</div><div>14</div><div>15</div></div>
<div class="code" style="left:50px;top:0px"><div>&lt;?php</div><div>&nbsp;</div><div><span class="bi">class</span> <span class="g">keywordModel</span> <span class="k">extends</span> <span class="gi">model</span>{</div><div>&nbsp;</div><div>    <span class="k">public</span> <span class="bi">function</span> <span class="g">setMenu</span>(<span class="o">$products</span>, <span class="o">$productID</span>, <span class="o">$branch</span> <span class="k">=</span> <span class="p">0</span>)</div><div>    {</div><div>        <span class="o">$this</span>-&gt;<span class="b">loadModel</span>(<span class="s">'product'</span>)-&gt;<span class="b">setMenu</span>($products, $productID, $branch);</div><div>        $selectHtml <span class="k">=</span> <span class="o">$this</span>-&gt;product-&gt;<span class="b">select</span>($products, $productID, <span class="s">'keyword'</span>, <span class="s">'index'</span>, <span class="s">''</span>, $</div><div>            branch);</div><div>        <span class="k">foreach</span>(<span class="o">$this</span>-&gt;lang-&gt;keyword-&gt;menu <span class="k">as</span> $key <span class="k">=&gt;</span> $menu)</div><div>        {</div><div>            $replace <span class="k">=</span> ($key <span class="k">==</span> <span class="s">'product'</span>) ? $selectHtml : $productID;</div><div>            <span class="bi">common</span>::<span class="b">setMenuVars</span>(<span class="o">$this</span>-&gt;lang-&gt;keyword-&gt;menu, $key, $replace);</div><div>        }</div><div>    }</div><div>}</div></div>
<div class="ig" style="left:50px;top:44px;height:166px"></div>
<div class="ig" style="left:78px;top:86px;height:110px"></div>
<div class="ig" style="left:106px;top:156px;height:26px"></div>
<svg class="mm" style="left:723px;top:0px" width="97" height="32" viewBox="0 0 97 32"><rect x="0" y="0.2" width="5" height="1.7" fill="#f8f8f2" opacity="0.43"/><rect x="0" y="4.2" width="5" height="1.7" fill="#66d9ef" opacity="0.60"/><rect x="6" y="4.2" width="12" height="1.7" fill="#a6e22e" opacity="0.60"/><rect x="19" y="4.2" width="7" height="1.7" fill="#f92672" opacity="0.60"/><rect x="27" y="4.2" width="5" height="1.7" fill="#a6e22e" opacity="0.60"/><rect x="32" y="4.2" width="1" height="1.7" fill="#f8f8f2" opacity="0.29"/><rect x="4" y="8.2" width="6" height="1.7" fill="#f92672" opacity="0.60"/><rect x="11" y="8.2" width="8" height="1.7" fill="#66d9ef" opacity="0.60"/><rect x="20" y="8.2" width="7" height="1.7" fill="#a6e22e" opacity="0.60"/><rect x="27" y="8.2" width="1" height="1.7" fill="#f8f8f2" opacity="0.29"/><rect x="28" y="8.2" width="9" height="1.7" fill="#fd971f" opacity="0.60"/><rect x="37" y="8.2" width="1" height="1.7" fill="#f8f8f2" opacity="0.13"/><rect x="39" y="8.2" width="10" height="1.7" fill="#fd971f" opacity="0.60"/><rect x="49" y="8.2" width="1" height="1.7" fill="#f8f8f2" opacity="0.13"/><rect x="51" y="8.2" width="7" height="1.7" fill="#fd971f" opacity="0.60"/><rect x="59" y="8.2" width="1" height="1.7" fill="#f92672" opacity="0.36"/><rect x="61" y="8.2" width="1" height="1.7" fill="#ae81ff" opacity="0.60"/><rect x="62" y="8.2" width="1" height="1.7" fill="#f8f8f2" opacity="0.29"/><rect x="4" y="10.2" width="1" height="1.7" fill="#f8f8f2" opacity="0.29"/><rect x="8" y="12.2" width="5" height="1.7" fill="#fd971f" opacity="0.60"/><rect x="13" y="12.2" width="2" height="1.7" fill="#f8f8f2" opacity="0.23"/><rect x="15" y="12.2" width="9" height="1.7" fill="#66d9ef" opacity="0.60"/><rect x="24" y="12.2" width="1" height="1.7" fill="#f8f8f2" opacity="0.29"/><rect x="25" y="12.2" width="9" height="1.7" fill="#e6db74" opacity="0.50"/><rect x="34" y="12.2" width="3" height="1.7" fill="#f8f8f2" opacity="0.25"/><rect x="37" y="12.2" width="7" height="1.7" fill="#66d9ef" opacity="0.60"/><rect x="44" y="12.2" width="11" height="1.7" fill="#f8f8f2" opacity="0.46"/><rect x="56" y="12.2" width="11" height="1.7" fill="#f8f8f2" opacity="0.48"/><rect x="68" y="12.2" width="9" height="1.7" fill="#f8f8f2" opacity="0.46"/><rect x="8" y="14.2" width="11" height="1.7" fill="#f8f8f2" opacity="0.52"/><rect x="20" y="14.2" width="1" height="1.7" fill="#f92672" opacity="0.36"/><rect x="22" y="14.2" width="5" height="1.7" fill="#fd971f" opacity="0.60"/><rect x="27" y="14.2" width="11" height="1.7" fill="#f8f8f2" opacity="0.42"/><rect x="38" y="14.2" width="6" height="1.7" fill="#66d9ef" opacity="0.60"/><rect x="44" y="14.2" width="11" height="1.7" fill="#f8f8f2" opacity="0.46"/><rect x="56" y="14.2" width="11" height="1.7" fill="#f8f8f2" opacity="0.48"/><rect x="68" y="14.2" width="9" height="1.7" fill="#e6db74" opacity="0.50"/><rect x="77" y="14.2" width="1" height="1.7" fill="#f8f8f2" opacity="0.13"/><rect x="79" y="14.2" width="7" height="1.7" fill="#e6db74" opacity="0.47"/><rect x="86" y="14.2" width="1" height="1.7" fill="#f8f8f2" opacity="0.13"/><rect x="88" y="14.2" width="2" height="1.7" fill="#e6db74" opacity="0.15"/><rect x="90" y="14.2" width="1" height="1.7" fill="#f8f8f2" opacity="0.13"/><rect x="92" y="14.2" width="1" height="1.7" fill="#f8f8f2" opacity="0.52"/><rect x="12" y="16.2" width="8" height="1.7" fill="#f8f8f2" opacity="0.45"/><rect x="8" y="18.2" width="7" height="1.7" fill="#f92672" opacity="0.60"/><rect x="15" y="18.2" width="1" height="1.7" fill="#f8f8f2" opacity="0.29"/><rect x="16" y="18.2" width="5" height="1.7" fill="#fd971f" opacity="0.60"/><rect x="21" y="18.2" width="21" height="1.7" fill="#f8f8f2" opacity="0.44"/><rect x="43" y="18.2" width="2" height="1.7" fill="#f92672" opacity="0.60"/><rect x="46" y="18.2" width="4" height="1.7" fill="#f8f8f2" opacity="0.52"/><rect x="51" y="18.2" width="2" height="1.7" fill="#f92672" opacity="0.34"/><rect x="54" y="18.2" width="6" height="1.7" fill="#f8f8f2" opacity="0.48"/><rect x="8" y="20.2" width="1" height="1.7" fill="#f8f8f2" opacity="0.29"/><rect x="12" y="22.2" width="8" height="1.7" fill="#f8f8f2" opacity="0.52"/><rect x="21" y="22.2" width="1" height="1.7" fill="#f92672" opacity="0.36"/><rect x="23" y="22.2" width="5" height="1.7" fill="#f8f8f2" opacity="0.47"/><rect x="29" y="22.2" width="2" height="1.7" fill="#f92672" opacity="0.36"/><rect x="32" y="22.2" width="9" height="1.7" fill="#e6db74" opacity="0.50"/><rect x="41" y="22.2" width="1" height="1.7" fill="#f8f8f2" opacity="0.29"/><rect x="43" y="22.2" width="1" height="1.7" fill="#f8f8f2" opacity="0.31"/><rect x="45" y="22.2" width="11" height="1.7" fill="#f8f8f2" opacity="0.52"/><rect x="57" y="22.2" width="1" height="1.7" fill="#f8f8f2" opacity="0.18"/><rect x="59" y="22.2" width="11" height="1.7" fill="#f8f8f2" opacity="0.49"/><rect x="12" y="24.2" width="6" height="1.7" fill="#66d9ef" opacity="0.60"/><rect x="18" y="24.2" width="2" height="1.7" fill="#f8f8f2" opacity="0.18"/><rect x="20" y="24.2" width="11" height="1.7" fill="#66d9ef" opacity="0.60"/><rect x="31" y="24.2" width="1" height="1.7" fill="#f8f8f2" opacity="0.29"/><rect x="32" y="24.2" width="5" height="1.7" fill="#fd971f" opacity="0.60"/><rect x="37" y="24.2" width="22" height="1.7" fill="#f8f8f2" opacity="0.42"/><rect x="60" y="24.2" width="5" height="1.7" fill="#f8f8f2" opacity="0.44"/><rect x="66" y="24.2" width="10" height="1.7" fill="#f8f8f2" opacity="0.47"/><rect x="8" y="26.2" width="1" height="1.7" fill="#f8f8f2" opacity="0.29"/><rect x="4" y="28.2" width="1" height="1.7" fill="#f8f8f2" opacity="0.29"/><rect x="0" y="30.2" width="1" height="1.7" fill="#f8f8f2" opacity="0.29"/></svg>
<div class="sb" style="left:825px;top:4px;height:300px;background:#575852"></div>
</div>
<div class="pane" style="left:838px;top:520px;width:811px;height:279px">
<div class="hl" style="left:0px;top:196px;height:14px"></div>
<div class="gut" style="left:-1px;top:0px"><div>1</div><div>2</div><div>3</div><div>4</div><div>5</div><div>6</div><div>7</div><div>8</div><div>&nbsp;</div><div>&nbsp;</div><div>9</div><div>10</div><div>11</div><div>12</div><div>13</div><div>14</div><div>15</div><div>16</div></div>
<div class="code" style="left:49px;top:0px"><div>&lt;?php <span class="k">include</span> <span class="s">'../../common/view/header.html.php'</span>;?&gt;</div><div>&lt;<span class="k">script</span>&gt;</div><div>&lt;?php</div><div><span class="c">/*<span class="z">判断</span>*/</span></div><div><span class="k">if</span>(<span class="o">$this</span>-&gt;config-&gt;keyword-&gt;homepage <span class="k">!=</span> <span class="s">'index'</span>):?&gt;</div><div><span class="k">$</span>(<span class="bi">function</span>()</div><div>{</div><div>    <span class="k">$</span>(<span class="s">'#modulemenu .nav li:last'</span>).<span class="b">after</span>(<span class="s">"&lt;li class='right'&gt;&lt;a style='font-size:12px' </span></div><div>        <span class="s">href='javascript:setHomepage(</span><span class="p">\</span><span class="s">"keyword</span><span class="p">\</span><span class="s">", </span><span class="p">\</span><span class="s">"index</span><span class="p">\</span><span class="s">")'&gt;&lt;i class='icon icon-cog'&gt;&lt;/i&gt;</span></div><div>        <span class="s">&lt;?php </span><span class="b">echo</span><span class="s"> $lang-&gt;homepage?&gt;&lt;/a&gt;&lt;/li&gt;"</span>)</div><div>});</div><div>&lt;?php <span class="k">endif</span>;?&gt;</div><div>&lt;/<span class="k">script</span>&gt;</div><div>&lt;<span class="k">div</span>&gt;keyword/index.php<span class="z">页面内容</span>&lt;/<span class="k">div</span>&gt;</div><div>&nbsp;</div><div>&nbsp;</div><div>&lt;?php <span class="k">include</span> <span class="s">'../../common/view/footer.html.php'</span>;?&gt;</div><div>&nbsp;</div></div>
<div class="ig" style="left:49px;top:100px;height:40px"></div>
<svg class="mm" style="left:722px;top:0px" width="89" height="36" viewBox="0 0 89 36"><rect x="0" y="0.2" width="5" height="1.7" fill="#f8f8f2" opacity="0.43"/><rect x="6" y="0.2" width="7" height="1.7" fill="#f92672" opacity="0.60"/><rect x="14" y="0.2" width="35" height="1.7" fill="#e6db74" opacity="0.46"/><rect x="49" y="0.2" width="3" height="1.7" fill="#f8f8f2" opacity="0.27"/><rect x="0" y="2.2" width="1" height="1.7" fill="#f8f8f2" opacity="0.29"/><rect x="1" y="2.2" width="6" height="1.7" fill="#f92672" opacity="0.60"/><rect x="7" y="2.2" width="1" height="1.7" fill="#f8f8f2" opacity="0.29"/><rect x="0" y="4.2" width="5" height="1.7" fill="#f8f8f2" opacity="0.43"/><rect x="0" y="6.2" width="8" height="1.7" fill="#75715e" opacity="0.16"/><rect x="0" y="8.2" width="2" height="1.7" fill="#f92672" opacity="0.60"/><rect x="2" y="8.2" width="1" height="1.7" fill="#f8f8f2" opacity="0.29"/><rect x="3" y="8.2" width="5" height="1.7" fill="#fd971f" opacity="0.60"/><rect x="8" y="8.2" width="27" height="1.7" fill="#f8f8f2" opacity="0.46"/><rect x="36" y="8.2" width="2" height="1.7" fill="#f92672" opacity="0.33"/><rect x="39" y="8.2" width="7" height="1.7" fill="#e6db74" opacity="0.47"/><rect x="46" y="8.2" width="4" height="1.7" fill="#f8f8f2" opacity="0.27"/><rect x="0" y="10.2" width="1" height="1.7" fill="#f92672" opacity="0.60"/><rect x="1" y="10.2" width="1" height="1.7" fill="#f8f8f2" opacity="0.29"/><rect x="2" y="10.2" width="8" height="1.7" fill="#66d9ef" opacity="0.60"/><rect x="10" y="10.2" width="2" height="1.7" fill="#f8f8f2" opacity="0.29"/><rect x="0" y="12.2" width="1" height="1.7" fill="#f8f8f2" opacity="0.29"/><rect x="4" y="14.2" width="1" height="1.7" fill="#f92672" opacity="0.60"/><rect x="5" y="14.2" width="1" height="1.7" fill="#f8f8f2" opacity="0.29"/><rect x="6" y="14.2" width="12" height="1.7" fill="#e6db74" opacity="0.56"/><rect x="19" y="14.2" width="4" height="1.7" fill="#e6db74" opacity="0.48"/><rect x="24" y="14.2" width="8" height="1.7" fill="#e6db74" opacity="0.49"/><rect x="32" y="14.2" width="2" height="1.7" fill="#f8f8f2" opacity="0.20"/><rect x="34" y="14.2" width="5" height="1.7" fill="#66d9ef" opacity="0.60"/><rect x="39" y="14.2" width="1" height="1.7" fill="#f8f8f2" opacity="0.29"/><rect x="40" y="14.2" width="4" height="1.7" fill="#e6db74" opacity="0.43"/><rect x="45" y="14.2" width="16" height="1.7" fill="#e6db74" opacity="0.49"/><rect x="62" y="14.2" width="22" height="1.7" fill="#e6db74" opacity="0.51"/><rect x="8" y="16.2" width="29" height="1.7" fill="#e6db74" opacity="0.55"/><rect x="37" y="16.2" width="1" height="1.7" fill="#ae81ff" opacity="0.30"/><rect x="38" y="16.2" width="8" height="1.7" fill="#e6db74" opacity="0.55"/><rect x="46" y="16.2" width="1" height="1.7" fill="#ae81ff" opacity="0.30"/><rect x="47" y="16.2" width="2" height="1.7" fill="#e6db74" opacity="0.18"/><rect x="50" y="16.2" width="1" height="1.7" fill="#ae81ff" opacity="0.30"/><rect x="51" y="16.2" width="6" height="1.7" fill="#e6db74" opacity="0.53"/><rect x="57" y="16.2" width="1" height="1.7" fill="#ae81ff" opacity="0.30"/><rect x="58" y="16.2" width="6" height="1.7" fill="#e6db74" opacity="0.32"/><rect x="65" y="16.2" width="11" height="1.7" fill="#e6db74" opacity="0.54"/><rect x="77" y="16.2" width="12" height="1.7" fill="#e6db74" opacity="0.46"/><rect x="8" y="18.2" width="5" height="1.7" fill="#e6db74" opacity="0.50"/><rect x="14" y="18.2" width="4" height="1.7" fill="#66d9ef" opacity="0.60"/><rect x="19" y="18.2" width="27" height="1.7" fill="#e6db74" opacity="0.48"/><rect x="46" y="18.2" width="1" height="1.7" fill="#f8f8f2" opacity="0.29"/><rect x="0" y="20.2" width="3" height="1.7" fill="#f8f8f2" opacity="0.26"/><rect x="0" y="22.2" width="5" height="1.7" fill="#f8f8f2" opacity="0.43"/><rect x="6" y="22.2" width="5" height="1.7" fill="#f92672" opacity="0.60"/><rect x="11" y="22.2" width="3" height="1.7" fill="#f8f8f2" opacity="0.27"/><rect x="0" y="24.2" width="2" height="1.7" fill="#f8f8f2" opacity="0.27"/><rect x="2" y="24.2" width="6" height="1.7" fill="#f92672" opacity="0.60"/><rect x="8" y="24.2" width="1" height="1.7" fill="#f8f8f2" opacity="0.29"/><rect x="0" y="26.2" width="1" height="1.7" fill="#f8f8f2" opacity="0.29"/><rect x="1" y="26.2" width="3" height="1.7" fill="#f92672" opacity="0.60"/><rect x="4" y="26.2" width="28" height="1.7" fill="#f8f8f2" opacity="0.47"/><rect x="32" y="26.2" width="3" height="1.7" fill="#f92672" opacity="0.60"/><rect x="35" y="26.2" width="1" height="1.7" fill="#f8f8f2" opacity="0.29"/><rect x="0" y="32.2" width="5" height="1.7" fill="#f8f8f2" opacity="0.43"/><rect x="6" y="32.2" width="7" height="1.7" fill="#f92672" opacity="0.60"/><rect x="14" y="32.2" width="35" height="1.7" fill="#e6db74" opacity="0.46"/><rect x="49" y="32.2" width="3" height="1.7" fill="#f8f8f2" opacity="0.27"/></svg>
</div>
<div class="bar" style="top:0;height:31px;box-shadow:0 1px 0 #20211c"></div>
<div class="bar" style="top:484px;height:36px;box-shadow:0 1px 0 #20211c"></div>
<div class="abs" style="left:0;top:30px;width:1649px;height:1px;background:#73746e"></div>
<div class="abs" style="left:0;top:519px;width:1649px;height:1px;background:#73746e"></div>
<div class="abs" style="left:836px;top:31px;width:2px;height:453px;background:#73746e"></div>
<div class="abs" style="left:836px;top:520px;width:2px;height:279px;background:#73746e"></div>
<svg class="abs" style="left:12px;top:9.0px" width="24" height="12" viewBox="0 0 24 12"><path d="M0.3 5.1 L8 0 L8 10.2 Z M14 0 L21.7 5.1 L14 10.2 Z" fill="#c2c3be"/></svg>
<svg class="abs" style="left:45px;top:1px" width="176" height="31" viewBox="0 0 176 31"><path d="M0 30 L12.6 2.6 Q13.3 1.3 15 1.3 L157.3 1.3 Q159 1.3 159.7 2.6 L172.5 30 L173 31 L-0.5 31 Z" fill="#272822"/><path d="M0.3 29.5 L12.6 2.6 Q13.3 1.3 15 1.3 L157.3 1.3 Q159 1.3 159.7 2.6 L172.2 29.5" fill="none" stroke="#1d1e19" stroke-width="1.2" opacity=".7"/></svg>
<div class="tl" style="left:67px;top:8px">keyword.php</div>
<div class="dot" style="left:186px;top:12px"></div>
<svg class="abs" style="left:849px;top:9.0px" width="24" height="12" viewBox="0 0 24 12"><path d="M0.3 5.1 L8 0 L8 10.2 Z M14 0 L21.7 5.1 L14 10.2 Z" fill="#c2c3be"/></svg>
<svg class="abs" style="left:882px;top:1px" width="176" height="31" viewBox="0 0 176 31"><path d="M0 30 L12.6 2.6 Q13.3 1.3 15 1.3 L157.3 1.3 Q159 1.3 159.7 2.6 L172.5 30 L173 31 L-0.5 31 Z" fill="#272822"/><path d="M0.3 29.5 L12.6 2.6 Q13.3 1.3 15 1.3 L157.3 1.3 Q159 1.3 159.7 2.6 L172.2 29.5" fill="none" stroke="#1d1e19" stroke-width="1.2" opacity=".7"/></svg>
<div class="tl" style="left:904px;top:8px">control.php</div>
<div class="dot" style="left:1023px;top:12px"></div>
<svg class="abs" style="left:12px;top:498.0px" width="24" height="12" viewBox="0 0 24 12"><path d="M0.3 5.1 L8 0 L8 10.2 Z M14 0 L21.7 5.1 L14 10.2 Z" fill="#c2c3be"/></svg>
<svg class="abs" style="left:45px;top:490px" width="176" height="31" viewBox="0 0 176 31"><path d="M0 30 L12.6 2.6 Q13.3 1.3 15 1.3 L157.3 1.3 Q159 1.3 159.7 2.6 L172.5 30 L173 31 L-0.5 31 Z" fill="#272822"/><path d="M0.3 29.5 L12.6 2.6 Q13.3 1.3 15 1.3 L157.3 1.3 Q159 1.3 159.7 2.6 L172.2 29.5" fill="none" stroke="#1d1e19" stroke-width="1.2" opacity=".7"/></svg>
<div class="tl" style="left:67px;top:497px">model.php</div>
<svg class="abs" style="left:185px;top:500px" width="9" height="9" viewBox="0 0 9 9"><path d="M1.4 1.4 L7.6 7.6 M7.6 1.4 L1.4 7.6" stroke="#9c9d97" stroke-width="1.9" fill="none"/></svg>
<svg class="abs" style="left:849px;top:498.0px" width="24" height="12" viewBox="0 0 24 12"><path d="M0.3 5.1 L8 0 L8 10.2 Z M14 0 L21.7 5.1 L14 10.2 Z" fill="#c2c3be"/></svg>
<svg class="abs" style="left:882px;top:490px" width="176" height="31" viewBox="0 0 176 31"><path d="M0 30 L12.6 2.6 Q13.3 1.3 15 1.3 L157.3 1.3 Q159 1.3 159.7 2.6 L172.5 30 L173 31 L-0.5 31 Z" fill="#272822"/><path d="M0.3 29.5 L12.6 2.6 Q13.3 1.3 15 1.3 L157.3 1.3 Q159 1.3 159.7 2.6 L172.2 29.5" fill="none" stroke="#1d1e19" stroke-width="1.2" opacity=".7"/></svg>
<div class="tl" style="left:904px;top:497px">index.html.php</div>
<svg class="abs" style="left:1022px;top:500px" width="9" height="9" viewBox="0 0 9 9"><path d="M1.4 1.4 L7.6 7.6 M7.6 1.4 L1.4 7.6" stroke="#9c9d97" stroke-width="1.9" fill="none"/></svg>
<svg class="abs" style="left:813.5px;top:10px" width="12" height="9" viewBox="0 0 12 9"><path d="M0.5 0 L10.5 0 L5.5 8.2 Z" fill="#d0d1cc"/></svg>
<svg class="abs" style="left:813.5px;top:499px" width="12" height="9" viewBox="0 0 12 9"><path d="M0.5 0 L10.5 0 L5.5 8.2 Z" fill="#d0d1cc"/></svg>
<div class="abs" style="left:0;top:0;width:1px;height:799px;background:#f0f0f6"></div>
</div></body></html>
